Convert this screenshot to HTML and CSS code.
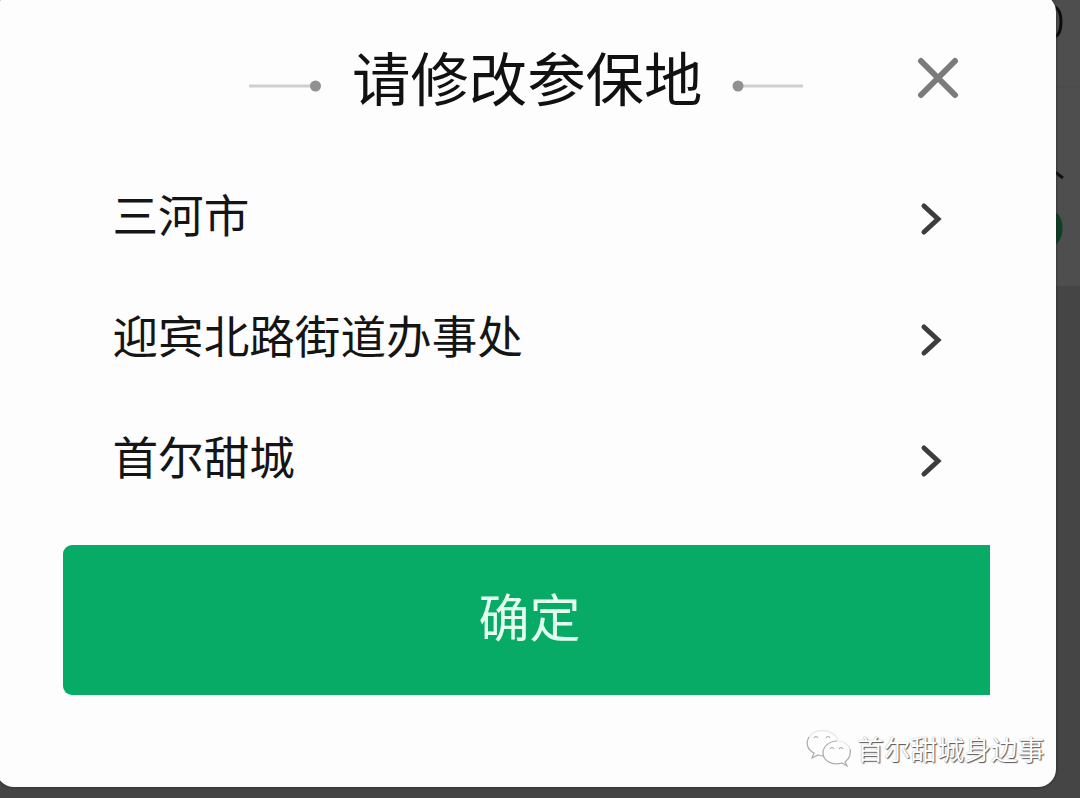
FILE: index.html
```html
<!DOCTYPE html>
<html lang="zh-CN">
    <head>
        <meta charset="UTF-8">
        <title>请修改参保地</title>
        <link rel="stylesheet" href="styles.css">
    </head>
    <body>
        <!-- page under the dialog -->
        <svg class="page-behind" viewBox="0 0 30 798">
            <rect width="30" height="286" fill="#4e4e4e"/>
            <path d="M0 87H30" stroke="#484848"/>
            <path d="M5 7C13 11 13 33 5 37" fill="none" stroke="#0c0c0c" stroke-width="3"/>
            <path d="M5 172L13 178" stroke="#111" stroke-width="3"/>
            <path d="M5 212C15 217 15 239 5 245Z" fill="#0d4026"/>
        </svg>

        <div class="dialog">
            <div class="dialog-header">
                <svg class="title-line" width="74" height="14" viewBox="0 0 74 14">
                    <path d="M0 7H68" stroke="#cfcfcf" stroke-width="3"/>
                    <circle cx="66.5" cy="7" r="5.5" fill="#919191"/>
                </svg>
                <h1 class="title">请修改参保地</h1>
                <svg class="title-line" width="74" height="14" viewBox="0 0 74 14">
                    <path d="M6 7H72" stroke="#cfcfcf" stroke-width="3"/>
                    <circle cx="7" cy="7" r="5.5" fill="#919191"/>
                </svg>
                <button class="close-button" aria-label="关闭">
                    <svg width="42" height="42" viewBox="0 0 42 42">
                        <path d="M4 4L38 38M38 4L4 38" stroke="#7b7b7b" stroke-width="6" stroke-linecap="round"/>
                    </svg>
                </button>
            </div>

            <div class="area-list">
                <div class="area-row">
                    <span>三河市</span>
                    <svg class="arrow" viewBox="0 0 22 34"><path d="M4 4L18 17L4 30"/></svg>
                </div>
                <div class="area-row">
                    <span>迎宾北路街道办事处</span>
                    <svg class="arrow" viewBox="0 0 22 34"><path d="M4 4L18 17L4 30"/></svg>
                </div>
                <div class="area-row">
                    <span>首尔甜城</span>
                    <svg class="arrow" viewBox="0 0 22 34"><path d="M4 4L18 17L4 30"/></svg>
                </div>
            </div>

            <button class="confirm-button">确定</button>
        </div>

        <div class="watermark">
            <svg class="wechat-icon" width="48" height="42" viewBox="0 0 48 42">
                <path class="faint" d="M4 8C9 -1 28 -1 33 11"/>
                <path d="M4 8C0 15 3 21 9 24L7 29L13 26C15 27 17 27 19 27"/>
                <path d="M32 12C25 12 18 17 18 24C18 31 26 37 37 34L42 37L40 33C44 30 46 25 45 20"/>
                <path class="faint" d="M32 12C39 12 44 16 45 20"/>
                <path d="M9 9Q11 6 13 9M21 9Q23 6 25 9M25 20Q27 17 29 20M34 20Q36 17 38 20"/>
            </svg>
            <span>首尔甜城身边事</span>
        </div>
    </body>
</html>
```
FILE: styles.css
```css
body{
    margin: 0;
    height: 798px;
    overflow: hidden;
    background-color: #454545;
    font-family: "Noto Sans CJK SC", sans-serif;
}
.page-behind{
    position: absolute;
    top: 0;
    right: 0;
    width: 30px;
    height: 798px;
}
.dialog{
    position: relative;
    box-sizing: border-box;
    width: 1060px;
    height: 793px;
    margin-top: -6px;
    margin-left: -4px;
    padding: 42px 66px 0 67px;
    background-color: #fdfdfd;
    border-radius: 18px;
    box-shadow: 0 0 3px #222;
}
.dialog-header{
    display: flex;
    align-items: center;
    height: 88px;
    padding-left: 186px;
}
.title{
    margin: 0 29px 9px 29px;
    color: #111;
    font-size: 58.4px;
    font-weight: 400;
    line-height: 88px;
    white-space: nowrap;
}
.title-line{
    flex: none;
    margin-top: 12px;
}
.close-button{
    height: 42px;
    margin-left: auto;
    margin-right: 31px;
    margin-bottom: 4px;
    padding: 0;
    border: none;
    background-color: transparent;
    cursor: pointer;
}
.area-list{
    padding: 34px 48px 0 49.5px;
}
.area-row{
    display: flex;
    align-items: center;
    justify-content: space-between;
    height: 121px;
    color: #151515;
    font-size: 45.6px;
    line-height: 66px;
}
.area-row span{
    margin-bottom: 12px;
}
.arrow{
    width: 22px;
    height: 34px;
    fill: none;
    stroke: #3d3d3d;
    stroke-width: 5;
    stroke-linecap: round;
}
.confirm-button{
    display: block;
    width: 927px;
    height: 150px;
    margin-top: 24px;
    padding: 0 0 10px 6px;
    border: none;
    border-radius: 9px 0 0 9px;
    background-color: #07ab66;
    color: #e2fff0;
    font-family: inherit;
    font-size: 51px;
    cursor: pointer;
}
.watermark{
    position: absolute;
    top: 729px;
    left: 805px;
    display: flex;
    align-items: center;
    gap: 4px;
    color: #fff;
    font-size: 26.8px;
    line-height: 40px;
    white-space: nowrap;
    text-shadow: 1px 1px 1px #555, 0 0 1px #999;
}
.watermark span{
    margin-bottom: 2px;
}
.wechat-icon{
    fill: none;
    stroke: #aaa;
    stroke-width: 1.2;
}
.wechat-icon .faint{
    stroke: #e6e6e6;
}
```
